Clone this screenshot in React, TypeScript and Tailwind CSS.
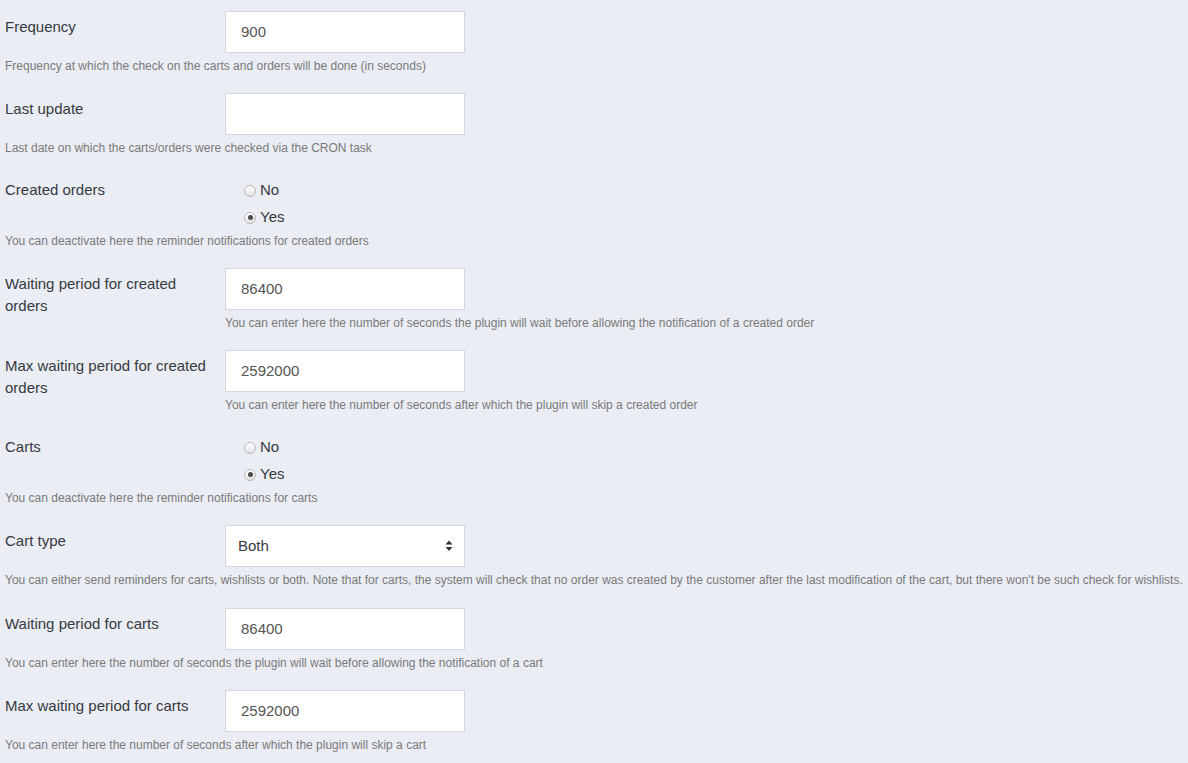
import type { ReactNode } from 'react';

const FONT = { fontFamily: '"Liberation Sans", Arial, sans-serif' };

function Help({ children }: { children: ReactNode }) {
  return <p className="text-[12px] leading-[17px] text-[#7a7a7a] whitespace-nowrap">{children}</p>;
}

function Label({ children, mt = 'mt-[5px]' }: { children: ReactNode; mt?: string }) {
  return <div className={`w-[220px] shrink-0 pr-4 text-[15px] leading-[22px] text-[#363a41] ${mt}`}>{children}</div>;
}

function TextInput({ value }: { value: string }) {
  return (
    <div className="w-[240px] h-[42px] border border-[#d3d8df] bg-white pl-[15px] flex items-center text-[15px] text-[#555]">
      {value}
    </div>
  );
}

function Radio({ checked, label }: { checked?: boolean; label: string }) {
  return (
    <div className="h-[27px] flex items-center pl-[19px] gap-[4px] text-[15px] text-[#363a41]">
      <span className="w-[12px] h-[12px] rounded-full border border-[#b9b9b9] bg-gradient-to-b from-white to-[#e3e3e3] flex items-center justify-center">
        {checked && <span className="w-[5px] h-[5px] rounded-full bg-[#4a4a4a]" />}
      </span>
      <span>{label}</span>
    </div>
  );
}

function InputGroup({ label, value, help, inlineHelp }: { label: ReactNode; value: string; help: string; inlineHelp?: boolean }) {
  return (
    <div className="pt-[11px] pb-[7px]">
      <div className="flex">
        <Label>{label}</Label>
        <div className="flex-1">
          <TextInput value={value} />
          {inlineHelp && <div className="mt-[5px]"><Help>{help}</Help></div>}
        </div>
      </div>
      {!inlineHelp && <div className="mt-[5px]"><Help>{help}</Help></div>}
    </div>
  );
}

function RadioGroup({ label, help }: { label: string; help: string }) {
  return (
    <div className="pt-[11px] pb-[7px]">
      <div className="flex">
        <Label mt="mt-[4px]">{label}</Label>
        <div className="pt-[2px]">
          <Radio label="No" />
          <Radio label="Yes" checked />
        </div>
      </div>
      <div className="mt-[2px]"><Help>{help}</Help></div>
    </div>
  );
}

function SelectGroup() {
  return (
    <div className="pt-[11px] pb-[8px]">
      <div className="flex">
        <Label>Cart type</Label>
        <div className="w-[240px] h-[42px] border border-[#d3d8df] bg-white pl-[12px] pr-[11px] flex items-center justify-between text-[15px] text-[#363a41]">
          <span>Both</span>
          <svg width="8" height="12" viewBox="0 0 8 12" fill="#333">
            <path d="M4 0.5 L7.5 4.5 L0.5 4.5 Z" />
            <path d="M0.5 7 L7.5 7 L4 11 Z" />
          </svg>
        </div>
      </div>
      <div className="mt-[5px]">
        <Help>You can either send reminders for carts, wishlists or both. Note that for carts, the system will check that no order was created by the customer after the last modification of the cart, but there won't be such check for wishlists.</Help>
      </div>
    </div>
  );
}

export default function App() {
  return (
    <div className="min-h-screen bg-[#eaedf4] px-[5px]" style={FONT}>
      <InputGroup label="Frequency" value="900" help="Frequency at which the check on the carts and orders will be done (in seconds)" />
      <InputGroup label="Last update" value="" help="Last date on which the carts/orders were checked via the CRON task" />
      <RadioGroup label="Created orders" help="You can deactivate here the reminder notifications for created orders" />
      <InputGroup
        label="Waiting period for created orders"
        value="86400"
        inlineHelp
        help="You can enter here the number of seconds the plugin will wait before allowing the notification of a created order"
      />
      <InputGroup
        label="Max waiting period for created orders"
        value="2592000"
        inlineHelp
        help="You can enter here the number of seconds after which the plugin will skip a created order"
      />
      <RadioGroup label="Carts" help="You can deactivate here the reminder notifications for carts" />
      <SelectGroup />
      <InputGroup label="Waiting period for carts" value="86400" help="You can enter here the number of seconds the plugin will wait before allowing the notification of a cart" />
      <InputGroup label="Max waiting period for carts" value="2592000" help="You can enter here the number of seconds after which the plugin will skip a cart" />
    </div>
  );
}
